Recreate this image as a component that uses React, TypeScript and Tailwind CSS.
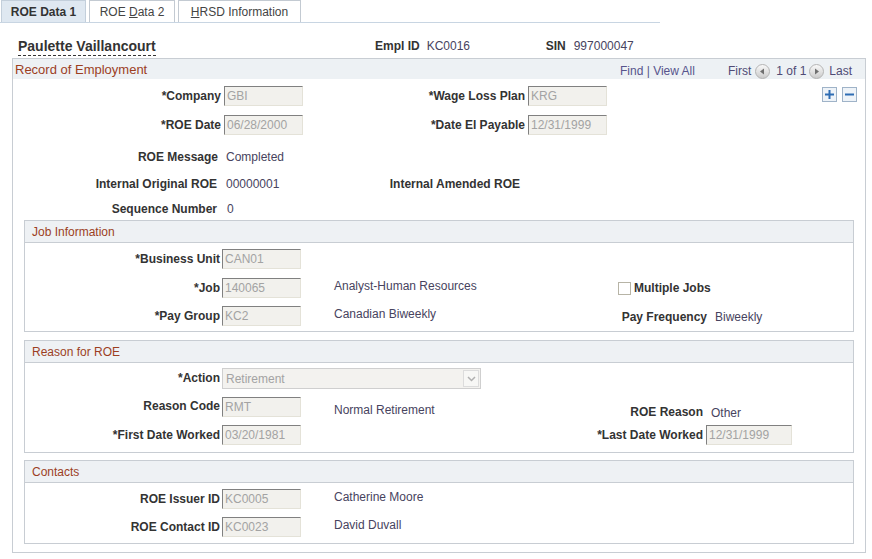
import React from "react";

const L = "shrink-0 text-right font-bold text-[#333333]";
const V = "shrink-0 text-[#47435e]";
const INP =
  "h-[20px] shrink-0 border border-t-[#808080] border-l-[#808080] border-r-[#e4e2d8] border-b-[#e4e2d8] bg-[#f2f1ed] pl-[2px] leading-[18px] text-[#a3a3a3]";

function Input({ v, w }: { v: string; w: string }) {
  return <div className={`${INP} ${w}`}>{v}</div>;
}

function NavArrow({ dir }: { dir: "l" | "r" }) {
  return (
    <svg width="15" height="15" viewBox="0 0 15 15" className="shrink-0">
      <defs>
        <linearGradient id={`g${dir}`} x1="0" y1="0" x2="0" y2="1">
          <stop offset="0" stopColor="#fbfbfb" />
          <stop offset="1" stopColor="#c9c9c9" />
        </linearGradient>
      </defs>
      <circle cx="7.5" cy="7.5" r="7" fill={`url(#g${dir})`} stroke="#b4b4b4" />
      {dir === "l" ? (
        <path d="M5 7.5 L9 4.5 L9 10.5 Z" fill="#6f6f6f" />
      ) : (
        <path d="M10 7.5 L6 4.5 L6 10.5 Z" fill="#6f6f6f" />
      )}
    </svg>
  );
}

function PlusMinus({ plus }: { plus: boolean }) {
  return (
    <svg width="15" height="15" viewBox="0 0 15 15" className="shrink-0">
      <rect x="0.5" y="0.5" width="14" height="14" fill="#eef3f8" stroke="#9fb3c8" />
      <rect x="3" y="6.5" width="9" height="2" fill="#2e6db3" />
      {plus && <rect x="6.5" y="3" width="2" height="9" fill="#2e6db3" />}
    </svg>
  );
}

function SubBox({ title, children, className }: { title: string; children: React.ReactNode; className: string }) {
  return (
    <div className={`ml-[11px] w-[830px] border border-[#c8cdd3] ${className}`}>
      <div className="flex h-[22px] items-center border-b border-[#c8cdd3] bg-[#eef1f4] pl-[7px] text-[#9c3f1f]">
        {title}
      </div>
      {children}
    </div>
  );
}

export default function App() {
  return (
    <div className="h-[559px] w-[872px] overflow-hidden bg-white font-['Liberation_Sans',Arial,sans-serif] text-[12px] leading-[14px] text-[#333333]">
      {/* Tabs */}
      <div className="flex h-[23px] w-[660px] items-end border-b border-[#c8d5e2]">
        <div className="ml-[1px] flex h-[22px] w-[85px] items-center justify-center border border-b-0 border-[#c3cfdb] bg-[#dfe8f1] font-bold text-[#333]">
          ROE Data 1
        </div>
        <div className="ml-[3px] flex h-[22px] w-[86px] items-center justify-center border border-b-0 border-[#c3cad2] bg-white text-[#444]">
          <span>
            ROE <span className="underline">D</span>ata 2
          </span>
        </div>
        <div className="ml-[3px] flex h-[22px] w-[123px] items-center justify-center border border-b-0 border-[#c3cad2] bg-white text-[#444]">
          <span>
            <span className="underline">H</span>RSD Information
          </span>
        </div>
      </div>

      {/* Name row */}
      <div className="flex h-[35px] items-center pt-[11px]">
        <div className="w-[375px] shrink-0 pl-[18px]">
          <span className="border-b border-dashed border-[#333] pb-[1px] text-[14px] font-bold leading-[16px] text-[#333]">
            Paulette Vaillancourt
          </span>
        </div>
        <span className="font-bold text-[#333]">Empl ID</span>
        <span className="ml-[7px] w-[119px] shrink-0 text-[#47435e]">KC0016</span>
        <span className="font-bold text-[#333]">SIN</span>
        <span className="ml-[8px] text-[#47435e]">997000047</span>
      </div>

      {/* Outer box */}
      <div className="ml-[12px] w-[854px] border border-[#c8cdd3] pb-[8px]">
        <div className="flex h-[20px] items-center bg-[#edf1f4] pl-[2px]">
          <span className="mt-[1px] text-[13px] text-[#9c3f1f]">Record of Employment</span>
          <div className="mt-[4px] ml-auto flex items-center">
            <span className="text-[#57548c]">Find | View All</span>
            <span className="ml-[33px] text-[#4f4b75]">First</span>
            <span className="ml-[4px] flex">
              <NavArrow dir="l" />
            </span>
            <span className="ml-[6px] text-[#4f4b75]">1 of 1</span>
            <span className="ml-[3px] flex">
              <NavArrow dir="r" />
            </span>
            <span className="ml-[5px] mr-[13px] text-[#4f4b75]">Last</span>
          </div>
        </div>

        {/* Company row */}
        <div className="mt-[7px] flex h-[20px] items-center">
          <div className={`${L} w-[208px]`}>*Company</div>
          <div className="ml-[3px] flex">
            <Input v="GBI" w="w-[79px]" />
          </div>
          <div className={`${L} w-[222px]`}>*Wage Loss Plan</div>
          <div className="ml-[3px] flex">
            <Input v="KRG" w="w-[79px]" />
          </div>
          <div className="mr-[8px] mb-[3px] ml-auto flex gap-[5px]">
            <PlusMinus plus={true} />
            <PlusMinus plus={false} />
          </div>
        </div>

        {/* ROE Date row */}
        <div className="mt-[9px] flex h-[20px] items-center">
          <div className={`${L} w-[208px]`}>*ROE Date</div>
          <div className="ml-[3px] flex">
            <Input v="06/28/2000" w="w-[79px]" />
          </div>
          <div className={`${L} w-[222px]`}>*Date El Payable</div>
          <div className="ml-[3px] flex">
            <Input v="12/31/1999" w="w-[79px]" />
          </div>
        </div>

        {/* ROE Message */}
        <div className="mt-[13px] flex h-[18px] items-center">
          <div className={`${L} w-[205px]`}>ROE Message</div>
          <div className={`${V} ml-[8px]`}>Completed</div>
        </div>

        {/* Internal Original ROE */}
        <div className="mt-[9px] flex h-[18px] items-center">
          <div className={`${L} w-[204px]`}>Internal Original ROE</div>
          <div className={`${V} ml-[9px] w-[104px]`}>00000001</div>
          <div className={`${L} w-[190px]`}>Internal Amended ROE</div>
        </div>

        {/* Sequence Number */}
        <div className="mt-[7px] flex h-[18px] items-center">
          <div className={`${L} w-[204px]`}>Sequence Number</div>
          <div className={`${V} ml-[10px]`}>0</div>
        </div>

        {/* Job Information */}
        <SubBox title="Job Information" className="mt-[2px] pb-[5px]">
          <div className="mt-[6px] flex h-[20px] items-center">
            <div className={`${L} w-[195px]`}>*Business Unit</div>
            <div className="ml-[2px] flex">
              <Input v="CAN01" w="w-[79px]" />
            </div>
          </div>
          <div className="mt-[9px] flex h-[20px] items-center">
            <div className={`${L} w-[195px]`}>*Job</div>
            <div className="ml-[2px] flex">
              <Input v="140065" w="w-[79px]" />
            </div>
            <div className={`${V} mb-[5px] ml-[33px] w-[284px]`}>Analyst-Human Resources</div>
            <div className="h-[13px] w-[13px] shrink-0 border border-[#b7b4a6] bg-white" />
            <div className="ml-[3px] font-bold text-[#333]">Multiple Jobs</div>
          </div>
          <div className="mt-[8px] flex h-[20px] items-center">
            <div className={`${L} w-[195px]`}>*Pay Group</div>
            <div className="ml-[2px] flex">
              <Input v="KC2" w="w-[79px]" />
            </div>
            <div className={`${V} mb-[5px] ml-[33px] w-[200px]`}>Canadian Biweekly</div>
            <div className={`${L} mt-[1px] w-[173px]`}>Pay Frequency</div>
            <div className={`${V} mt-[2px] ml-[8px]`}>Biweekly</div>
          </div>
        </SubBox>

        {/* Reason for ROE */}
        <SubBox title="Reason for ROE" className="mt-[8px] pb-[7px]">
          <div className="mt-[5px] flex h-[21px] items-center">
            <div className={`${L} mb-[2px] w-[195px]`}>*Action</div>
            <div className="ml-[2px] flex h-[21px] w-[259px] shrink-0 items-center border border-[#cfcfcf] bg-[#f3f2ef] pl-[3px] text-[#a3a3a3]">
              <span>Retirement</span>
              <div className="mr-[1px] ml-auto flex h-[17px] w-[16px] items-center justify-center border border-[#dcdcdc] bg-[#f7f7f5]">
                <svg width="9" height="6" viewBox="0 0 9 6">
                  <path d="M1 1 L4.5 4.5 L8 1" fill="none" stroke="#b0b0b0" strokeWidth="1.5" />
                </svg>
              </div>
            </div>
          </div>
          <div className="mt-[8px] flex h-[20px] items-center">
            <div className={`${L} mb-[2px] w-[195px]`}>Reason Code</div>
            <div className="ml-[2px] flex">
              <Input v="RMT" w="w-[79px]" />
            </div>
            <div className={`${V} mt-[5px] ml-[33px] w-[200px]`}>Normal Retirement</div>
            <div className={`${L} mt-[10px] w-[169px]`}>ROE Reason</div>
            <div className={`${V} mt-[11px] ml-[8px]`}>Other</div>
          </div>
          <div className="mt-[8px] flex h-[20px] items-center">
            <div className={`${L} w-[195px]`}>*First Date Worked</div>
            <div className="ml-[2px] flex">
              <Input v="03/20/1981" w="w-[79px]" />
            </div>
            <div className={`${L} w-[402px]`}>*Last Date Worked</div>
            <div className="ml-[3px] flex">
              <Input v="12/31/1999" w="w-[86px]" />
            </div>
          </div>
        </SubBox>

        {/* Contacts */}
        <SubBox title="Contacts" className="mt-[7px] pb-[6px]">
          <div className="mt-[6px] flex h-[20px] items-center">
            <div className={`${L} w-[195px]`}>ROE Issuer ID</div>
            <div className="ml-[2px] flex">
              <Input v="KC0005" w="w-[79px]" />
            </div>
            <div className={`${V} mb-[4px] ml-[33px]`}>Catherine Moore</div>
          </div>
          <div className="mt-[8px] flex h-[20px] items-center">
            <div className={`${L} w-[195px]`}>ROE Contact ID</div>
            <div className="ml-[2px] flex">
              <Input v="KC0023" w="w-[79px]" />
            </div>
            <div className={`${V} mb-[4px] ml-[33px]`}>David Duvall</div>
          </div>
        </SubBox>
      </div>
    </div>
  );
}
